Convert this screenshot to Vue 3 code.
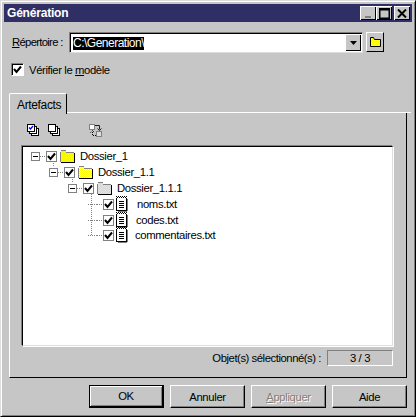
<script setup>
const nodes = [
  { id: 1, name: 'Dossier_1', indent: 8, kind: 'gray' },
  { id: 2, name: 'Dossier_1.1', indent: 26, kind: 'yellow' },
  { id: 3, name: 'Dossier_1.1.1', indent: 45, kind: 'gray' },
  { id: 4, name: 'noms.txt', indent: 65, kind: 'file', gap: 8 },
  { id: 5, name: 'codes.txt', indent: 65, kind: 'file', gap: 7 },
  { id: 6, name: 'commentaires.txt', indent: 65, kind: 'file', gap: 6 },
]

// checkerboard pixels of the folder body, drawn one by one so they stay crisp
const folderPixels = []
for (let y = 1; y < 12; y++) {
  for (let x = 1; x < 14; x++) {
    if ((x + y) % 2 === 0 && (y > 2 || x < 6)) folderPixels.push({ x, y })
  }
}

function rowIndent(node) {
  return { paddingLeft: node.indent + 'px' }
}
</script>

<template>
  <div class="dialog">
    <div class="titlebar">
      <span class="title">Génération</span>
      <div class="win-buttons">
        <button class="win-btn disabled-min"><span class="min-bar"></span></button>
        <button class="win-btn">
          <svg width="11" height="11" viewBox="0 0 11 11"><path d="M0 0h11v11H0zM1.5 2.5v7h8v-7z" fill="#000" fill-rule="evenodd" /></svg>
        </button>
        <button class="win-btn close">
          <svg width="10" height="9" viewBox="0 0 10 9"><path d="M1 0.5l8 8M9 0.5l-8 8" stroke="#000" stroke-width="2" fill="none" /></svg>
        </button>
      </div>
    </div>

    <div class="dir-row">
      <label class="dir-label"><u>R</u>épertoire :</label>
      <div class="combo">
        <span class="selected">C:\Generation\</span>
        <span class="combo-arrow">
          <svg width="7" height="4" viewBox="0 0 7 4"><path d="M0 0h7L3.5 4z" fill="#000" /></svg>
        </span>
      </div>
      <button class="folder-btn">
        <svg width="11" height="10" viewBox="0 0 11 10">
          <path d="M0.5 9.5V0.5h3l1 2h6v7z" fill="#ffff00" stroke="#000" />
        </svg>
      </button>
    </div>

    <div class="check-row">
      <span class="check big">
        <svg width="9" height="9" viewBox="0 0 9 9"><path d="M1 4l2.5 3L8 1.5" fill="none" stroke="#000" stroke-width="2" /></svg>
      </span>
      <span class="check-label">Vérifier le <u>m</u>odèle</span>
    </div>

    <div class="tabs">
      <div class="tab">Artefacts</div>
      <div class="tab-line"></div>
    </div>

    <div class="panel">
      <div class="toolbar">
        <svg width="12" height="12" viewBox="0 0 12 12">
          <rect x="4.5" y="4.5" width="7" height="7" fill="#fff" stroke="#000" />
          <rect x="2.5" y="2.5" width="7" height="7" fill="#fff" stroke="#000" />
          <rect x="0.5" y="0.5" width="7" height="7" fill="#fff" stroke="#000" />
          <path d="M2 3.5l1.5 1.5L6 2" fill="none" stroke="#0000ff" stroke-width="1.3" />
        </svg>
        <svg class="tool-two" width="12" height="12" viewBox="0 0 12 12">
          <rect x="4.5" y="4.5" width="7" height="7" fill="#fff" stroke="#000" />
          <rect x="2.5" y="2.5" width="7" height="7" fill="#fff" stroke="#000" />
          <rect x="0.5" y="0.5" width="7" height="7" fill="#fff" stroke="#000" />
        </svg>
        <svg class="tool-three" width="13" height="13" viewBox="0 0 13 13">
          <rect x="0.5" y="0.5" width="5" height="5" fill="#fff" stroke="#808080" />
          <rect x="7.5" y="7.5" width="5" height="5" fill="#ddd" stroke="#808080" />
          <path d="M6 1.5h4.5v4M8.5 4.5l2 2 2-2" fill="none" stroke="#0000ff" />
          <path d="M7 11.5H3.5V7M1.5 8.5l2-2 2 2" fill="none" stroke="#000" stroke-dasharray="1 1" />
        </svg>
      </div>

      <div class="tree">
        <div v-for="node in nodes" :key="node.id" class="tree-row" :style="rowIndent(node)">
          <span class="expander" :class="{ leaf: node.kind === 'file' }">
            <span v-if="node.kind !== 'file'" class="minus"></span>
          </span>
          <span class="dots"></span>
          <span class="check">
            <svg width="9" height="9" viewBox="0 0 9 9"><path d="M1 4l2.5 3L8 1.5" fill="none" stroke="#000" stroke-width="2" /></svg>
          </span>
          <svg v-if="node.kind === 'file'" class="icon-file" width="14" height="16" viewBox="0 0 14 16">
            <rect x="1.5" y="1.5" width="10" height="13" fill="#fff" stroke="#000" />
            <path d="M1 0.5h11" stroke="#000" stroke-dasharray="1 1" />
            <path d="M1 1.5h11" stroke="#fff" stroke-dasharray="1 1" />
            <path d="M12.5 3v12M3 15.5h9" stroke="#808080" />
            <path d="M4 5.5h5M4 7.5h5M4 9.5h5M4 11.5h5" stroke="#000" />
          </svg>
          <svg v-else class="icon-folder" width="15" height="13" viewBox="0 0 15 13" shape-rendering="crispEdges">
            <path d="M1 1h5l1 2h7v9H1z" :fill="node.kind === 'yellow' ? '#ffffff' : '#d8d8d8'" />
            <rect v-for="p in folderPixels" :key="p.x + '-' + p.y" :x="p.x" :y="p.y" width="1" height="1" fill="#ffff00" />
            <path d="M0.5 12V1.5M1 0.5h5M6.5 1.5v1M7 2.5h7" stroke="#808080" fill="none" />
            <path d="M14.5 3v10M1 12.5h13" stroke="#000" fill="none" />
          </svg>
          <span class="node-name" :style="node.gap ? { marginLeft: node.gap + 'px' } : null">{{ node.name }}</span>
        </div>
        <span class="vline vline-a"></span>
        <span class="vline vline-b"></span>
        <span class="vline vline-c"></span>
      </div>

      <div class="status">
        <span class="status-label">Objet(s) sélectionné(s) :</span>
        <span class="count">3 / 3</span>
      </div>
    </div>

    <div class="actions">
      <button class="btn default">OK</button>
      <button class="btn">Annuler</button>
      <button class="btn disabled"><u>A</u>ppliquer</button>
      <button class="btn">Aide</button>
    </div>
  </div>
</template>

<style scoped>
.dialog {
  width: 416px;
  height: 417px;
  box-sizing: border-box;
  padding: 3px 4px 4px 3px;
  background: #c6c6c6;
  border-top: 1px solid #dedede;
  border-left: 1px solid #dedede;
  border-right: 1px solid #000;
  border-bottom: 1px solid #000;
  box-shadow: inset 1px 1px 0 #fff, inset -1px -1px 0 #808080;
  display: flex;
  flex-direction: column;
  font-family: "Liberation Sans", Arial, sans-serif;
  font-size: 11.3px;
  letter-spacing: -0.35px;
  color: #000;
  overflow: hidden;
}

button {
  font: inherit;
  letter-spacing: inherit;
  color: inherit;
  padding: 0;
  margin: 0;
}

.titlebar {
  height: 18px;
  width: 408px;
  flex: none;
  background: #2f2f66;
  display: flex;
  align-items: center;
  justify-content: space-between;
}

.title {
  color: #fff;
  font-weight: bold;
  font-size: 12px;
  letter-spacing: -0.2px;
  margin-left: 3px;
}

.win-buttons {
  display: flex;
  margin-right: 2px;
}

.win-btn {
  width: 16px;
  height: 14px;
  box-sizing: border-box;
  background: #c6c6c6;
  border: none;
  box-shadow: inset 1px 1px 0 #fff, inset -1px -1px 0 #000;
  display: flex;
  align-items: center;
  justify-content: center;
}

.win-btn.close {
  margin-left: 2px;
  width: 16px;
}

.win-btn.disabled-min {
  align-items: flex-end;
  padding-bottom: 2px;
}

.min-bar {
  width: 6px;
  height: 2px;
  background: #808080;
}

.dir-row {
  display: flex;
  align-items: flex-start;
  margin-top: 10px;
  padding-left: 8px;
  height: 21px;
  flex: none;
}

.dir-label {
  width: 57px;
  flex: none;
  line-height: 20px;
  letter-spacing: -0.7px;
}

.combo {
  width: 294px;
  height: 21px;
  box-sizing: border-box;
  flex: none;
  background: #fff;
  border-top: 1px solid #808080;
  border-left: 1px solid #808080;
  border-right: 1px solid #dedede;
  border-bottom: 1px solid #dedede;
  box-shadow: inset 1px 1px 0 #000;
  position: relative;
  padding: 3px 0 0 3px;
  font-size: 12px;
  letter-spacing: -0.5px;
}

.selected {
  display: inline-block;
  background: #000;
  color: #fff;
  height: 13px;
  line-height: 13px;
}

.combo-arrow {
  position: absolute;
  right: 1px;
  top: 1px;
  width: 16px;
  height: 17px;
  background: #c6c6c6;
  box-shadow: inset 1px 1px 0 #fff, inset -1px -1px 0 #000;
  display: flex;
  align-items: center;
  justify-content: center;
}

.folder-btn {
  width: 18px;
  height: 20px;
  margin-left: 3px;
  background: #c6c6c6;
  border: 1px solid;
  border-color: #fff #000 #000 #fff;
  box-sizing: border-box;
  display: flex;
  align-items: center;
  justify-content: center;
}

.check-row {
  display: flex;
  align-items: center;
  gap: 5px;
  margin-top: 10px;
  padding-left: 7px;
  height: 13px;
  flex: none;
}

.check-label {
  letter-spacing: -0.4px;
}

.check {
  width: 11px;
  height: 11px;
  box-sizing: border-box;
  background: #fff;
  border: 1px solid #808080;
  display: flex;
  align-items: center;
  justify-content: center;
  flex: none;
}

.check.big {
  width: 13px;
  height: 13px;
  border-color: #808080 #fff #fff #808080;
  box-shadow: inset 1px 1px 0 #000;
}

.tabs {
  display: flex;
  align-items: flex-end;
  margin-top: 15px;
  height: 22px;
  flex: none;
  padding-left: 5px;
  width: 402px;
}

.tab {
  width: 58px;
  height: 21px;
  box-sizing: border-box;
  border-top: 1px solid #fff;
  border-left: 1px solid #fff;
  border-right: 1px solid #000;
  border-radius: 2px 2px 0 0;
  padding: 4px 0 0 7px;
  position: relative;
  top: 1px;
  background: #c6c6c6;
  z-index: 1;
  font-size: 12px;
}

.tab-line {
  flex: 1;
  border-bottom: 1px solid #fff;
}

.panel {
  width: 398px;
  margin-left: 5px;
  height: 265px;
  box-sizing: border-box;
  flex: none;
  border-left: 1px solid #fff;
  border-right: 1px solid #000;
  border-bottom: 1px solid #000;
  padding: 11px 13px 0 12px;
  display: flex;
  flex-direction: column;
}

.toolbar {
  height: 13px;
  padding-left: 5px;
  display: flex;
  align-items: flex-start;
  flex: none;
}

.tool-two {
  margin-left: 9px;
}

.tool-three {
  margin-left: 29px;
}

.tree {
  margin-top: 9px;
  height: 200px;
  box-sizing: border-box;
  flex: none;
  background: #fff;
  border-top: 1px solid #000;
  border-left: 1px solid #000;
  border-right: 1px solid #dedede;
  border-bottom: 1px solid #dedede;
  box-shadow: -1px -1px 0 #808080, 1px 1px 0 #fff;
  padding-top: 1px;
  position: relative;
}

.tree-row {
  height: 16px;
  display: flex;
  align-items: center;
}

.tree-row:nth-child(6) {
  margin-top: -1px;
}

.expander {
  width: 9px;
  height: 9px;
  box-sizing: border-box;
  border: 1px solid #808080;
  background: #fff;
  display: flex;
  align-items: center;
  justify-content: center;
  flex: none;
}

.expander.leaf {
  height: 1px;
  border: none;
  background: repeating-linear-gradient(90deg, #808080 0 1px, transparent 1px 2px);
}

.minus {
  width: 5px;
  height: 1px;
  background: #000;
}

.dots {
  width: 6px;
  height: 1px;
  flex: none;
  background: repeating-linear-gradient(90deg, #808080 0 1px, transparent 1px 2px);
}

.icon-folder {
  margin-left: 3px;
  flex: none;
}

.icon-file {
  margin-left: 1px;
  flex: none;
}

.node-name {
  margin-left: 5px;
  white-space: nowrap;
}

.vline {
  position: absolute;
  width: 1px;
  background: repeating-linear-gradient(180deg, #808080 0 1px, transparent 1px 2px);
}

.vline-a {
  left: 30px;
  top: 16px;
  height: 4px;
}

.vline-b {
  left: 49px;
  top: 32px;
  height: 4px;
}

.vline-c {
  left: 68px;
  top: 47px;
  height: 41px;
}

.status {
  display: flex;
  justify-content: flex-end;
  align-items: center;
  gap: 6px;
  margin-top: 4px;
  height: 16px;
}

.status-label {
  letter-spacing: -0.45px;
}

.count {
  width: 66px;
  height: 16px;
  box-sizing: border-box;
  border: 1px solid;
  border-color: #808080 #fff #fff #808080;
  text-align: center;
  line-height: 14px;
}

.actions {
  display: flex;
  justify-content: flex-end;
  gap: 6px;
  margin-top: 7px;
  width: 403px;
  flex: none;
}

.btn {
  width: 75px;
  height: 23px;
  box-sizing: border-box;
  background: #c6c6c6;
  border: 1px solid;
  border-color: #fff #000 #000 #fff;
  box-shadow: inset -1px -1px 0 #808080;
}

.btn.default {
  border-color: #000;
  box-shadow: inset 1px 1px 0 #fff, inset -1px -1px 0 #808080;
  border-bottom-width: 2px;
  border-right-width: 2px;
}

.btn.disabled {
  color: #808080;
  text-shadow: 1px 1px 0 #fff;
}
</style>
